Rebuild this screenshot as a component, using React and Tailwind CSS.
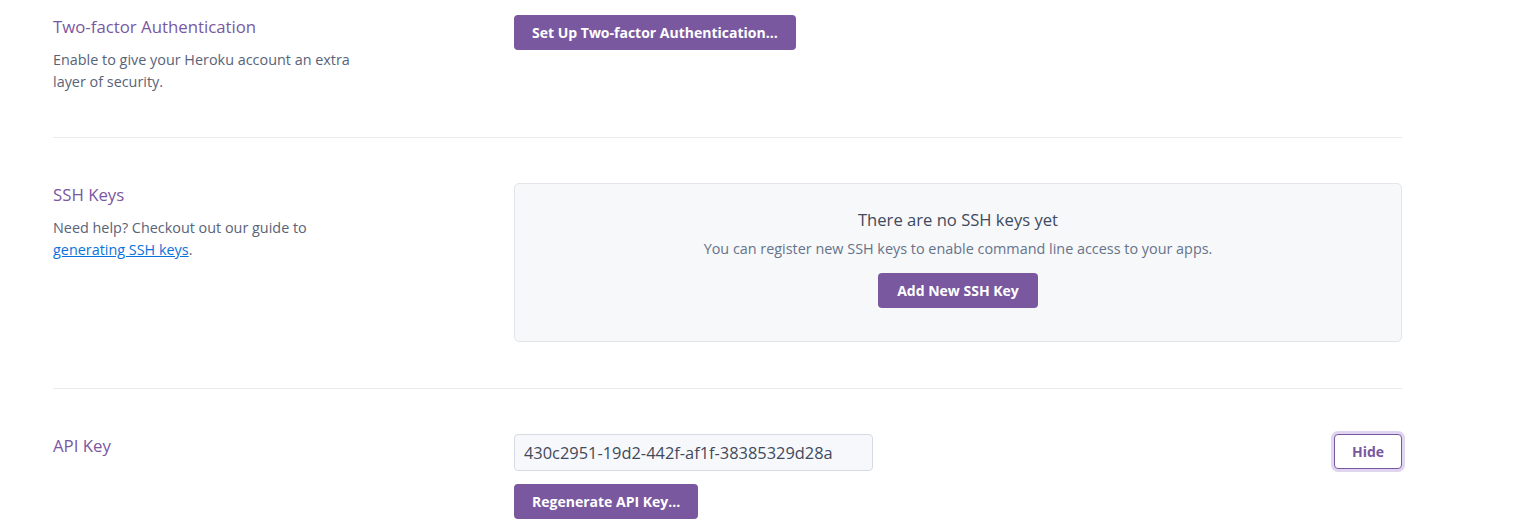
export default function App() {
  const font = { fontFamily: '"Open Sans", "Noto Sans", sans-serif' };

  return (
    <div className="min-h-screen bg-white" style={font}>
      <div className="ml-[53px] w-[1349px] pt-[15px]">
        {/* Two-factor */}
        <section className="flex pb-[44px] border-b border-[#e9e9ee]">
          <div className="w-[461px] shrink-0">
            <h3 className="text-[16.8px] leading-[24px] text-[#79589f]">Two-factor Authentication</h3>
            <p className="mt-[10px] max-w-[310px] text-[14.4px] leading-[22px] text-[#596377]">
              Enable to give your Heroku account an extra layer of security.
            </p>
          </div>
          <div className="flex-1">
            <button className="h-[35px] px-[18px] rounded-[4px] bg-[#79589f] text-white text-[14px] font-bold">
              Set Up Two-factor Authentication...
            </button>
          </div>
        </section>

        {/* SSH Keys */}
        <section className="flex pt-[45px] pb-[46px] border-b border-[#e9e9ee]">
          <div className="w-[461px] shrink-0">
            <h3 className="text-[16.8px] leading-[24px] text-[#79589f]">SSH Keys</h3>
            <p className="mt-[10px] max-w-[310px] text-[14.4px] leading-[22px] text-[#596377]">
              Need help? Checkout out our guide to{" "}
              <a href="#" className="text-[#0b72d9] underline">generating SSH keys</a>.
            </p>
          </div>
          <div className="flex-1">
            <div className="h-[159px] rounded-[5px] border border-[#e3e5ea] bg-[#f7f8fa] pt-[24px] flex flex-col items-center">
              <div className="text-[16.6px] leading-[24px] text-[#3f4a5c]">There are no SSH keys yet</div>
              <div className="mt-[6px] text-[14.4px] leading-[22px] text-[#66738a]">
                You can register new SSH keys to enable command line access to your apps.
              </div>
              <button className="mt-[13px] h-[35px] w-[160px] rounded-[4px] bg-[#79589f] text-white text-[14px] font-bold">
                Add New SSH Key
              </button>
            </div>
          </div>
        </section>

        {/* API Key */}
        <section className="flex pt-[45px]">
          <div className="w-[461px] shrink-0">
            <h3 className="text-[16.8px] leading-[24px] text-[#79589f]">API Key</h3>
          </div>
          <div className="flex-1 flex justify-between items-start">
            <div>
              <input
                readOnly
                value="430c2951-19d2-442f-af1f-38385329d28a"
                className="block h-[37px] w-[359px] rounded-[4px] border border-[#d6dae3] bg-[#f7f8fb] px-[9px] text-[16.4px] text-[#3f4a5c] outline-none"
                style={font}
              />
              <button className="mt-[13px] h-[35px] px-[18px] rounded-[4px] bg-[#79589f] text-white text-[14px] font-bold">
                Regenerate API Key...
              </button>
            </div>
            <button className="h-[35px] w-[68px] rounded-[4px] border border-[#79589f] bg-white text-[#79589f] text-[14px] font-bold ring-[3px] ring-[#e0d5f0]">
              Hide
            </button>
          </div>
        </section>
      </div>
    </div>
  );
}
